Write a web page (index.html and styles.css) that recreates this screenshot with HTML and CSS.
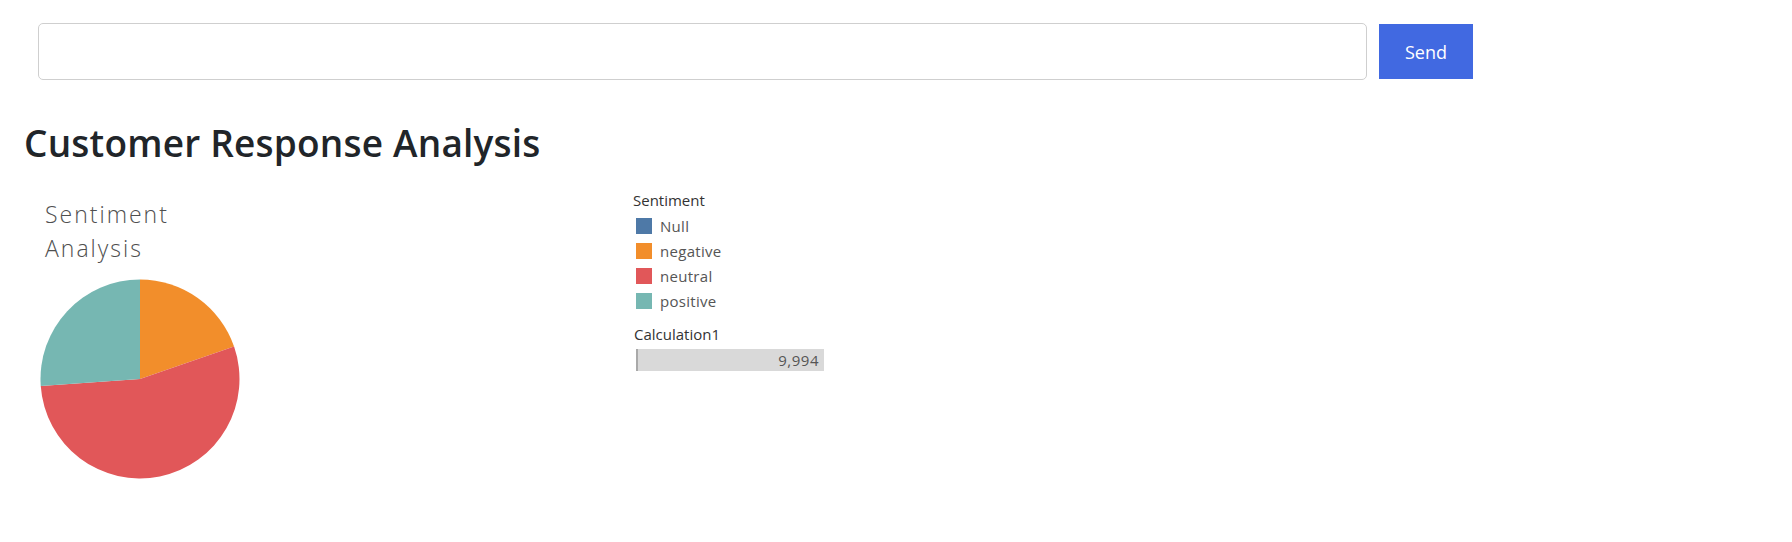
FILE: index.html
```html
<!DOCTYPE html>
<html lang="en">
<head>
  <meta charset="UTF-8">
  <meta name="viewport" content="width=device-width, initial-scale=1.0">
  <title>Customer Response Analysis</title>
  <link rel="stylesheet" href="styles.css">
</head>
<body>
  <form class="ask">
    <input type="text" class="ask-input">
    <button type="button" class="ask-btn">Send</button>
  </form>

  <h1>Customer Response Analysis</h1>

  <div class="viz">
    <div class="viz-main">
      <div class="viz-title">Sentiment<br>Analysis</div>
      <svg class="pie" width="200" height="200" viewBox="0 0 200 200">
        <path d="M100 100 L100 0.5 A99.5 99.5 0 0 1 194.08 67.6 Z" fill="#f28e2b"/>
        <path d="M100 100 L194.08 67.6 A99.5 99.5 0 1 1 0.74 106.94 Z" fill="#e15759"/>
        <path d="M100 100 L0.74 106.94 A99.5 99.5 0 0 1 100 0.5 Z" fill="#76b7b2"/>
      </svg>
    </div>

    <div class="legend">
      <div class="legend-head">Sentiment</div>
      <div class="legend-item"><span class="swatch null"></span>Null</div>
      <div class="legend-item"><span class="swatch neg"></span>negative</div>
      <div class="legend-item"><span class="swatch neu"></span>neutral</div>
      <div class="legend-item"><span class="swatch pos"></span>positive</div>

      <div class="legend-head calc">Calculation1</div>
      <div class="range">9,994</div>
    </div>
  </div>
</body>
</html>
```

FILE: styles.css
```css
/* strona analizy */
body {
  margin: 0;
  font-family: 'Open Sans', sans-serif;
  color: #212529;
  background: #fff;
}

.ask {
  display: flex;
  align-items: center;
  gap: 12px;
  width: 1435px;
  margin: 23px 0 0 38px;
}

.ask-input {
  flex: 1;
  height: 57px;
  box-sizing: border-box;
  border: 1px solid #cfcfcf;
  border-radius: 5px;
  padding: 0 12px;
  font-size: 16px;
}

.ask-btn {
  width: 94px;
  height: 55px;
  border: none;
  background: #4169e1;
  color: #fff;
  font-family: 'Open Sans', sans-serif;
  font-size: 18px;
  padding: 0;
}

h1 {
  margin: 41px 0 0 24px;
  font-size: 37px;
  line-height: 43px;
  font-weight: 600;
  letter-spacing: 0.2px;
  color: #212529;
}

.viz {
  display: flex;
  margin-top: 16px;
}

.viz-main {
  width: 593px;
  padding-left: 40px;
}

.viz-title {
  margin-top: 17px;
  padding-left: 5px;
  font-size: 23px;
  line-height: 34px;
  font-weight: 300;
  letter-spacing: 2px;
  color: #4f4f4f;
}

.pie {
  display: block;
  margin-top: 14px;
}

.legend {
  margin-top: 11px;
  font-size: 15px;
  color: #555;
}

.legend-head {
  line-height: 18px;
  color: #333;
  margin-bottom: 4px;
}

.legend-head.calc {
  margin: 12px 0 6px 1px;
}

.legend-item {
  display: flex;
  align-items: center;
  height: 25px;
  padding-left: 3px;
  letter-spacing: 0.3px;
}

.swatch {
  width: 16px;
  height: 16px;
  margin-right: 8px;
}

.swatch.null { background: #4e79a7; }
.swatch.neg { background: #f28e2b; }
.swatch.neu { background: #e15759; }
.swatch.pos { background: #76b7b2; }

.range {
  width: 188px;
  height: 22px;
  margin-left: 3px;
  box-sizing: border-box;
  line-height: 22px;
  background: #d9d9d9;
  border-left: 2px solid #a9a9a9;
  text-align: right;
  padding-right: 5px;
  letter-spacing: 0.5px;
}
```
